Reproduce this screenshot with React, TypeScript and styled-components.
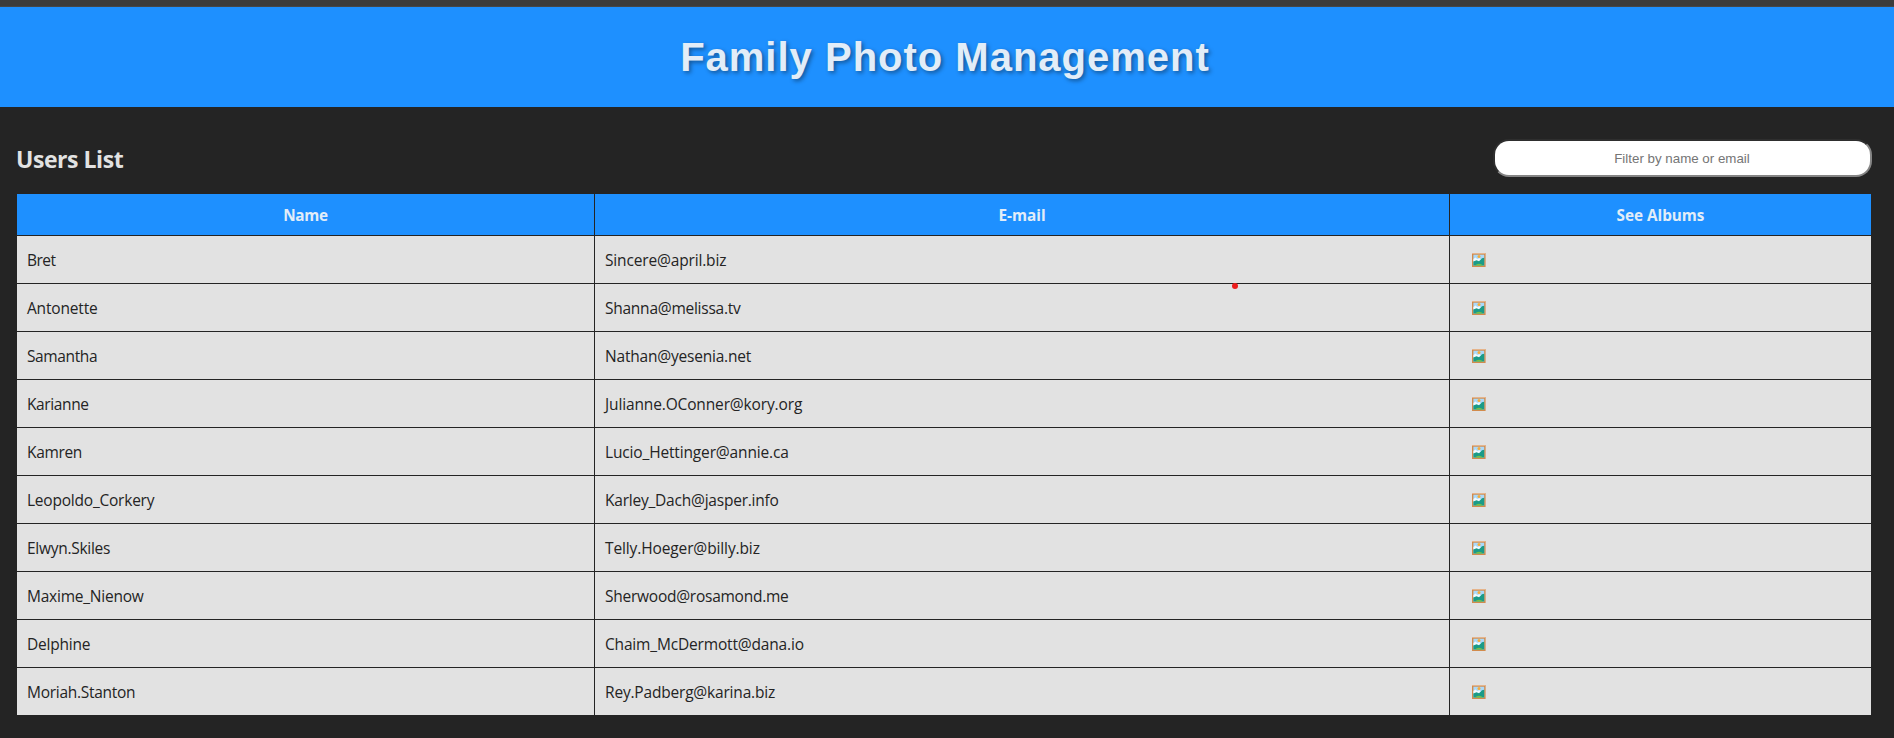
import React from 'react';
import styled, { createGlobalStyle } from 'styled-components';

const GlobalStyle = createGlobalStyle`
  * { box-sizing: border-box; }
  body {
    margin: 0;
    background: #242424;
    color: #e2e2e2;
    font-family: 'Segoe UI', 'Open Sans', 'Noto Sans', sans-serif;
    font-size: 16px;
  }
`;

const Page = styled.div`
  position: relative;
  height: 738px;
  overflow: hidden;
`;

const TopStrip = styled.div`
  height: 7px;
  background: #3c3c3c;
  border-bottom: 1px solid #474747;
`;

const Header = styled.header`
  height: 100px;
  display: flex;
  align-items: center;
  justify-content: center;
  background: #1e90ff;
`;

const Title = styled.h1`
  margin: 0;
  padding-right: 4px;
  font: bold 40px/46px 'Liberation Sans', Arial, sans-serif;
  letter-spacing: 1px;
  color: #e2edf8;
  text-shadow: 2px 2px 4px rgba(0, 0, 0, 0.4);
`;

const Main = styled.main`
  padding: 32px 23px 0 17px;
`;

const Toolbar = styled.div`
  height: 55px;
  display: flex;
  align-items: flex-start;
  justify-content: space-between;
`;

const Heading = styled.h2`
  margin: 3px 0 0 -1px;
  font-size: 23px;
  line-height: 34px;
  font-weight: 700;
  letter-spacing: -0.45px;
`;

const Filter = styled.input`
  width: 379px;
  height: 38px;
  margin-right: -1px;
  padding: 0 1px 0 0;
  border: 2px solid;
  border-color: #2e2e2e #858585 #858585 #2e2e2e;
  border-radius: 16px;
  background: #fff;
  font: 13.333px 'Liberation Sans', Arial, sans-serif;
  text-align: center;
  outline: none;
  &::placeholder { color: #757575; opacity: 1; }
`;

const Table = styled.div`
  display: grid;
  grid-template-columns: 577px 854px 421px;
  column-gap: 1px;
  row-gap: 1px;
  grid-template-rows: 41px;
  grid-auto-rows: 47px;
`;

const HeadCell = styled.div<{ $track: number }>`
  display: flex;
  align-items: center;
  justify-content: center;
  padding-top: 1px;
  background: #1e90ff;
  color: #e2edf8;
  font-size: 15.3px;
  font-weight: 700;
  letter-spacing: ${(p) => p.$track}px;
`;

const Cell = styled.div<{ $inset?: number }>`
  display: flex;
  align-items: center;
  padding: 1px 0 0 ${(p) => p.$inset ?? 10}px;
  background: #e2e2e2;
  color: #242424;
  font-size: 15.5px;
  white-space: nowrap;
`;

const Fitted = styled.span<{ $track: number }>`
  letter-spacing: ${(p) => p.$track}px;
`;

const Marker = styled.span`
  position: absolute;
  left: 1232px;
  top: 283px;
  width: 6px;
  height: 6px;
  border-radius: 50%;
  background: #ec1c1c;
`;

const Picture = () => (
  <svg width="14" height="14" viewBox="0 0 14 14" aria-label="Albums">
    <rect width="13.6" height="14" fill="#d28b4c" />
    <rect width="13.6" height="1" fill="#e6b48a" />
    <rect x="1.4" y="1.7" width="10.8" height="10.8" fill="#a9d9fa" />
    <path d="M1.4 6 3.5 4.6 5.2 6 7.5 5.3 9 6.5 8 8.5H1.4Z" fill="#f1faff" />
    <circle cx="7" cy="3.6" r="1.5" fill="#f5ac3c" />
    <path d="M1.4 8.5 4.5 7.3 7 8.3 10 5.3 12.2 4.8V12.5H1.4Z" fill="#1a9b88" />
    <path d="M2.8 12.5Q7 8.8 11.2 12.5Z" fill="#78c043" />
  </svg>
);

const users: { name: string; email: string; nt: number; et: number }[] = [
  { name: 'Bret', email: 'Sincere@april.biz', nt: -0.5, et: -0.16 },
  { name: 'Antonette', email: 'Shanna@melissa.tv', nt: -0.18, et: -0.25 },
  { name: 'Samantha', email: 'Nathan@yesenia.net', nt: -0.38, et: -0.2 },
  { name: 'Karianne', email: 'Julianne.OConner@kory.org', nt: -0.38, et: -0.14 },
  { name: 'Kamren', email: 'Lucio_Hettinger@annie.ca', nt: -0.34, et: -0.15 },
  { name: 'Leopoldo_Corkery', email: 'Karley_Dach@jasper.info', nt: -0.22, et: -0.22 },
  { name: 'Elwyn.Skiles', email: 'Telly.Hoeger@billy.biz', nt: -0.28, et: -0.12 },
  { name: 'Maxime_Nienow', email: 'Sherwood@rosamond.me', nt: -0.23, et: -0.25 },
  { name: 'Delphine', email: 'Chaim_McDermott@dana.io', nt: -0.22, et: -0.17 },
  { name: 'Moriah.Stanton', email: 'Rey.Padberg@karina.biz', nt: -0.28, et: -0.19 },
];

export default function App() {
  return (
    <Page>
      <GlobalStyle />
      <TopStrip />
      <Header>
        <Title>Family Photo Management</Title>
      </Header>
      <Main>
        <Toolbar>
          <Heading>Users List</Heading>
          <Filter placeholder="Filter by name or email" />
        </Toolbar>
        <Table>
          <HeadCell $track={-0.3}>Name</HeadCell>
          <HeadCell $track={0.02}>E-mail</HeadCell>
          <HeadCell $track={-0.02}>See Albums</HeadCell>
          {users.map((u) => (
            <React.Fragment key={u.name}>
              <Cell><Fitted $track={u.nt}>{u.name}</Fitted></Cell>
              <Cell><Fitted $track={u.et}>{u.email}</Fitted></Cell>
              <Cell $inset={22}><Picture /></Cell>
            </React.Fragment>
          ))}
        </Table>
      </Main>
      <Marker />
    </Page>
  );
}
